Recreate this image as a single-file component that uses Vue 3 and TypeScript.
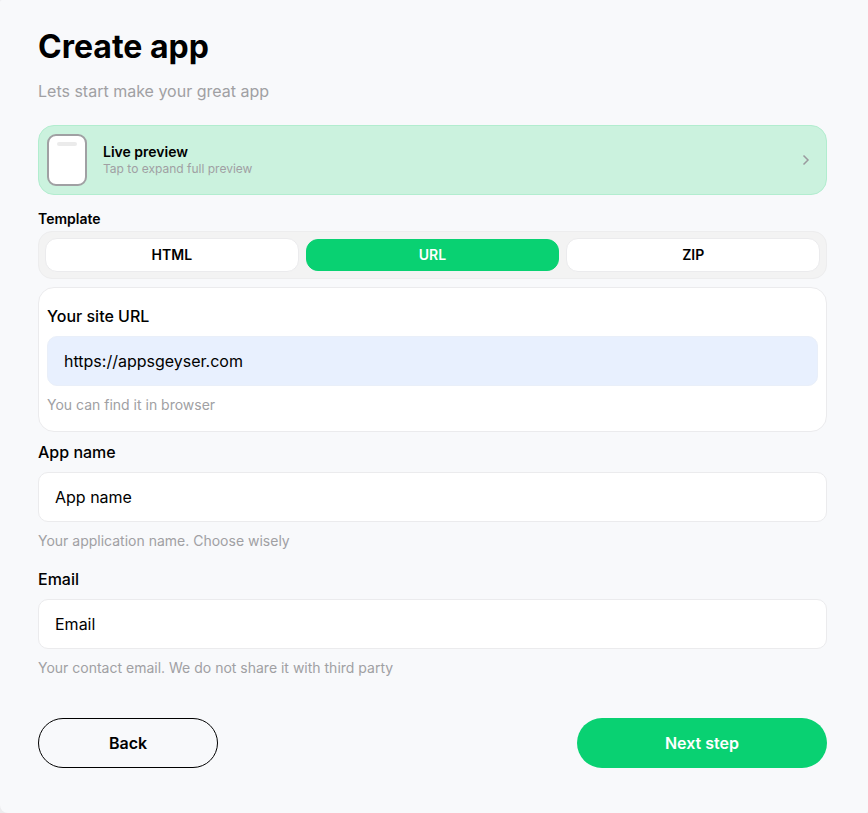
<script setup lang="ts">
const tabs: { label: string; active: boolean }[] = [
  { label: 'HTML', active: false },
  { label: 'URL', active: true },
  { label: 'ZIP', active: false },
]
</script>

<template>
  <main class="page">
    <h1 class="title">Create app</h1>
    <p class="subtitle">Lets start make your great app</p>

    <section class="preview">
      <div class="phone"><span class="notch"></span></div>
      <div class="preview-text">
        <div class="preview-title">Live preview</div>
        <div class="preview-sub">Tap to expand full preview</div>
      </div>
      <svg class="chevron" width="8" height="12" viewBox="0 0 8 12" fill="none">
        <path d="M1.5 1.5 6 6l-4.500 4.500" stroke="#9a9a9e" stroke-width="1.500" />
      </svg>
    </section>

    <div class="tpl-label">Template</div>
    <div class="tabs">
      <button v-for="t in tabs" :key="t.label" class="tab" :class="{ active: t.active }">{{ t.label }}</button>
    </div>

    <section class="url-card">
      <div class="label">Your site URL</div>
      <div class="input blue">https://appsgeyser.com</div>
      <div class="hint">You can find it in browser</div>
    </section>

    <div class="field first">
      <div class="label">App name</div>
      <div class="input">App name</div>
      <div class="hint">Your application name. Choose wisely</div>
    </div>

    <div class="field">
      <div class="label">Email</div>
      <div class="input">Email</div>
      <div class="hint">Your contact email. We do not share it with third party</div>
    </div>

    <div class="actions">
      <button class="btn back">Back</button>
      <button class="btn next">Next step</button>
    </div>
  </main>
</template>

<style>
html, body { margin: 0; background: #ececee; }
</style>

<style scoped>
.page {
  box-sizing: border-box;
  width: 868px;
  height: 813px;
  padding: 27px 41px 0 38px;
  background: #f8f9fb;
  border-radius: 2px 0 2px 8px;
  font-family: Inter, sans-serif;
  color: #000;
}
.title { margin: 0; font-size: 32px; line-height: 39px; font-weight: 700; }
.subtitle { margin: 15px 0 0; font-size: 16px; line-height: 20px; color: #a0a0a3; }
.preview {
  box-sizing: border-box;
  margin-top: 24px;
  height: 70px;
  display: flex;
  align-items: center;
  padding: 0 16px 0 8px;
  background: #cbf2de;
  border: 1px solid #b2edcf;
  border-radius: 16px;
}
.phone {
  box-sizing: border-box;
  width: 40px;
  height: 52px;
  background: #fff;
  border: 2px solid #a0a0a3;
  border-radius: 9px;
  display: flex;
  justify-content: center;
  padding-top: 6px;
}
.notch { width: 20px; height: 4px; border-radius: 2px; background: #ebebeb; }
.preview-text { margin-left: 16px; flex: 1; padding-bottom: 1px; }
.preview-title { font-size: 14px; line-height: 17px; font-weight: 600; margin-bottom: 1px; }
.preview-sub { font-size: 12px; line-height: 15px; color: #a0a0a3; }
.tpl-label { margin-top: 15px; font-size: 14px; line-height: 17px; font-weight: 600; }
.tabs {
  box-sizing: border-box;
  margin-top: 4px;
  height: 48px;
  display: grid;
  grid-template-columns: repeat(3, 1fr);
  gap: 7px;
  padding: 6px;
  background: #f3f3f3;
  border: 1px solid #ededee;
  border-radius: 14px;
}
.tab {
  font: 600 14px/17px Inter, sans-serif;
  color: #000;
  background: #fff;
  border: 1px solid #ebebed;
  border-radius: 12px;
  padding: 0 0 1px;
}
.tab.active { margin: 1px 0; background: #09d172; border-color: #09d172; color: #fff; }
.url-card {
  box-sizing: border-box;
  margin-top: 8px;
  height: 145px;
  padding: 18px 8px 0;
  background: #fff;
  border: 1px solid #ebebed;
  border-radius: 16px;
}
.label { font-size: 16px; line-height: 20px; font-weight: 500; }
.input {
  box-sizing: border-box;
  height: 50px;
  margin-top: 10px;
  padding: 0 16px;
  display: flex;
  align-items: center;
  font-size: 16px;
  background: #fff;
  border: 1px solid #ebebed;
  border-radius: 10px;
}
.input.blue { background: #e8f0fe; border-color: #e9eff9; }
.hint { margin-top: 10px; font-size: 14px; line-height: 17px; color: #a0a0a3; }
.field { margin-top: 20px; }
.field.first { margin-top: 10px; }
.actions { margin-top: 42px; display: flex; justify-content: space-between; }
.btn {
  box-sizing: border-box;
  height: 50px;
  border-radius: 25px;
  font: 600 16px/20px Inter, sans-serif;
  padding: 0;
}
.back { width: 180px; background: transparent; border: 1px solid #000; color: #000; }
.next { width: 250px; background: #09d172; border: none; color: #fff; }
</style>
